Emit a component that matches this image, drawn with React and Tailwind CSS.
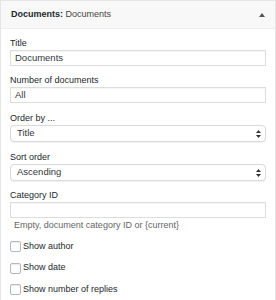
import React from 'react';

const font = { fontFamily: '"Liberation Sans", Arial, sans-serif' };

const Label = ({ children }) => (
  <div className="text-[9px] leading-[12px] text-[#23282d] mb-px">{children}</div>
);

const TextInput = ({ value }) => (
  <div className="h-[16px] border border-[#dddddd] bg-white pl-[4px] flex items-center text-[9.5px] text-[#32373c] shadow-[inset_0_1px_1px_rgba(0,0,0,0.04)]">
    {value}
  </div>
);

const Select = ({ value }) => (
  <div className="h-[17px] border border-[#d9d9d9] rounded-[4px] bg-white pl-[6px] pr-[4px] flex items-center justify-between text-[9.5px] text-[#32373c] shadow-[0_1px_1px_rgba(0,0,0,0.06)]">
    <span>{value}</span>
    <svg width="5" height="8" viewBox="0 0 5 8">
      <path d="M2.5 0 L5 3 L0 3 Z" fill="#333" />
      <path d="M2.5 8 L5 5 L0 5 Z" fill="#333" />
    </svg>
  </div>
);

const Check = ({ label }) => (
  <div className="flex items-center h-[11px]">
    <div className="w-[11px] h-[11px] border border-[#b4b9be] rounded-[2px] bg-white shadow-[inset_0_1px_1px_rgba(0,0,0,0.08)]" />
    <span className="ml-[2px] text-[9px] text-[#23282d]">{label}</span>
  </div>
);

export default function App() {
  return (
    <div className="w-[276px] h-[300px] bg-white" style={font}>
      <div className="h-full border border-[#e5e5e5] border-b-0 flex flex-col">
        <div className="h-[28px] shrink-0 bg-[#f8f8f8] border-b border-[#eeeeee] flex items-center justify-between pl-[10px] pr-[10px] text-[9px] text-[#23282d]">
          <div>
            <span className="font-bold">Documents:</span>
            <span className="text-[#444]"> Documents</span>
          </div>
          <svg width="6" height="4" viewBox="0 0 6 4">
            <path d="M3 0 L6 4 L0 4 Z" fill="#555" />
          </svg>
        </div>
        <div className="pl-[9px] pr-[9px] pt-[8px]">
          <div>
            <Label>Title</Label>
            <TextInput value="Documents" />
          </div>
          <div className="mt-[8px]">
            <Label>Number of documents</Label>
            <TextInput value="All" />
          </div>
          <div className="mt-[9px]">
            <Label>Order by ...</Label>
            <Select value="Title" />
          </div>
          <div className="mt-[9px]">
            <Label>Sort order</Label>
            <Select value="Ascending" />
          </div>
          <div className="mt-[8px]">
            <Label>Category ID</Label>
            <TextInput value="" />
            <div className="pl-[4px] text-[9px] leading-[12px] text-[#666] mt-px">
              Empty, document category ID or {'{current}'}
            </div>
          </div>
          <div className="mt-[10px] flex flex-col gap-[10.5px]">
            <Check label="Show author" />
            <Check label="Show date" />
            <Check label="Show number of replies" />
          </div>
        </div>
      </div>
    </div>
  );
}
